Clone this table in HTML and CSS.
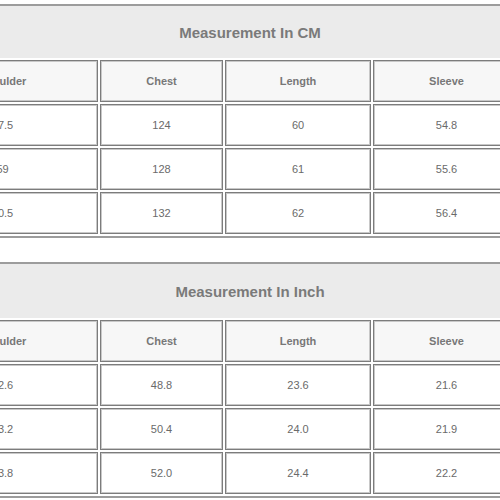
FILE: index.html
```html
<!DOCTYPE html>
<html>
<head>
<meta charset="utf-8">
<link rel="stylesheet" href="styles.css">
</head>
<body>
<div class="page">
  <section class="block block-cm">
    <div class="title">Measurement In CM</div>
    <table class="sizes">
      <colgroup><col class="c-sh"><col class="c-ch"><col class="c-le"><col class="c-sl"></colgroup>
      <tr class="head"><th>Shoulder</th><th>Chest</th><th>Length</th><th>Sleeve</th></tr>
      <tr><td>57.5</td><td>124</td><td>60</td><td>54.8</td></tr>
      <tr><td>59</td><td>128</td><td>61</td><td>55.6</td></tr>
      <tr><td>60.5</td><td>132</td><td>62</td><td>56.4</td></tr>
    </table>
  </section>
  <section class="block block-inch">
    <div class="title">Measurement In Inch</div>
    <table class="sizes">
      <colgroup><col class="c-sh"><col class="c-ch"><col class="c-le"><col class="c-sl"></colgroup>
      <tr class="head"><th>Shoulder</th><th>Chest</th><th>Length</th><th>Sleeve</th></tr>
      <tr><td>22.6</td><td>48.8</td><td>23.6</td><td>21.6</td></tr>
      <tr><td>23.2</td><td>50.4</td><td>24.0</td><td>21.9</td></tr>
      <tr><td>23.8</td><td>52.0</td><td>24.4</td><td>22.2</td></tr>
    </table>
  </section>
</div>
</body>
</html>
```
FILE: styles.css
```css
html, body {
  margin: 0;
  padding: 0;
  background: #fff;
}
body {
  width: 500px;
  height: 500px;
  overflow: hidden;
  font-family: "Liberation Sans", Arial, sans-serif;
}
.page {
  width: 500px;
  overflow: hidden;
}
.block {
  border-top: 2px solid #9c9c9c;
  border-bottom: 2px solid #9c9c9c;
}
.block-cm {
  margin-top: 4px;
}
.block-inch {
  margin-top: 24px;
}
.title {
  height: 52px;
  background: #ebebeb;
  display: flex;
  align-items: center;
  justify-content: center;
  font-size: 15px;
  font-weight: bold;
  color: #7a7a7a;
}
.block-inch .title {
  height: 54px;
}
.sizes {
  border-collapse: separate;
  border-spacing: 2px;
  table-layout: fixed;
  width: 617px;
  margin-left: -95px;
}
.c-sh { width: 191px; }
.c-ch { width: 123px; }
.c-le { width: 146px; }
.c-sl { width: 147px; }
.sizes th, .sizes td {
  box-sizing: border-box;
  height: 42px;
  padding: 0;
  border: 1px solid #7c7c7c;
  box-shadow: inset 1px 1px 0 #c8c8c8, inset -1px -1px 0 #c8c8c8;
  text-align: center;
  vertical-align: middle;
  font-size: 11px;
}
.sizes th {
  background: #f7f7f7;
  font-weight: bold;
  color: #777;
}
.sizes td {
  background: #fff;
  color: #6a6a6a;
}
```
